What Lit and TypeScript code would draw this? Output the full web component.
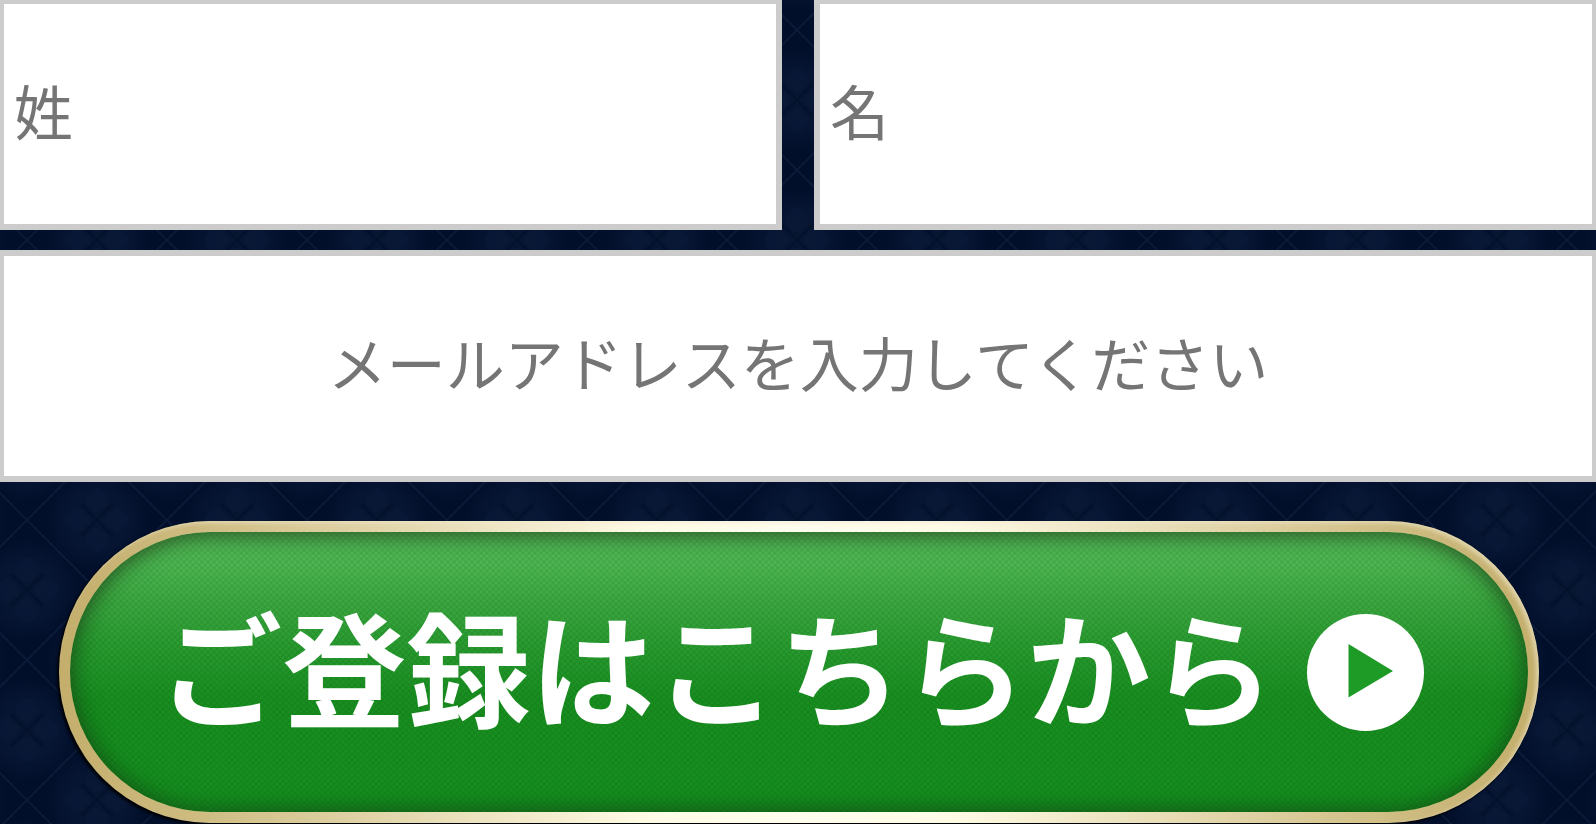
import { LitElement, html, css } from "lit";
import { customElement } from "lit/decorators.js";

@customElement("app-root")
export class AppRoot extends LitElement {
  static styles = css`
    :host {
      display: block;
      min-height: 100vh;
      overflow: hidden;
      box-sizing: border-box;
      font-family: "Noto Sans CJK JP", sans-serif;
      background-color: #010f2b;
      background-image: url("data:image/svg+xml,%3Csvg xmlns='http://www.w3.org/2000/svg' width='140' height='140'%3E%3Cdefs%3E%3CradialGradient id='g'%3E%3Cstop offset='0' stop-color='%23122342' stop-opacity='.34'/%3E%3Cstop offset='.6' stop-color='%23122342' stop-opacity='.28'/%3E%3Cstop offset='1' stop-color='%23122342' stop-opacity='0'/%3E%3C/radialGradient%3E%3Cg id='c'%3E%3Ccircle r='52' fill='url(%23g)'/%3E%3Cg fill='%231a2b4a' fill-opacity='.12'%3E%3Crect x='-10' y='-30' width='20' height='20' rx='5' transform='rotate(45 0 -20)'/%3E%3Crect x='-10' y='10' width='20' height='20' rx='5' transform='rotate(45 0 20)'/%3E%3Crect x='-30' y='-10' width='20' height='20' rx='5' transform='rotate(45 -20 0)'/%3E%3Crect x='10' y='-10' width='20' height='20' rx='5' transform='rotate(45 20 0)'/%3E%3C/g%3E%3Cpath d='M-16-16 16 16M16-16-16 16' stroke='%23000b22' stroke-opacity='.5' stroke-width='2'/%3E%3C/g%3E%3C/defs%3E%3Cuse href='%23c' x='70' y='0'/%3E%3Cuse href='%23c' x='70' y='140'/%3E%3Cuse href='%23c' x='0' y='70'/%3E%3Cuse href='%23c' x='140' y='70'/%3E%3Cpath d='M0 0 140 140M140 0 0 140' stroke='%231f3050' stroke-opacity='.4' stroke-width='1.5'/%3E%3C/svg%3E");
      background-position: 27px 100px;
    }
    .form {
      display: flex;
      flex-direction: column;
      gap: 20px;
    }
    .names {
      display: grid;
      grid-template-columns: 1fr 1fr;
      gap: 32px;
    }
    .field {
      display: block;
      box-sizing: border-box;
      width: 100%;
      height: 232px;
      margin: 0;
      padding: 0 10px 10px;
      border: 6px solid #ccc;
      border-radius: 0;
      background: #fff;
      color: #333;
      font: 400 59px "Noto Sans CJK JP", sans-serif;
      outline: none;
    }
    .field::placeholder {
      color: #757575;
      opacity: 1;
    }
    .names .field {
      height: 230px;
      border-top-width: 4px;
    }
    .family {
      border-left-width: 4px;
    }
    .given {
      border-right-width: 4px;
    }
    .email {
      border-left-width: 4px;
      border-right-width: 4px;
      text-align: center;
    }
    .submit {
      display: flex;
      box-sizing: border-box;
      height: 302px;
      margin: 19px 57px 0 59px;
      padding: 0;
      border: 11px solid transparent;
      border-radius: 151px;
      background:
        linear-gradient(90deg, #c4ae6c, #cdbb80 9%, #fffbe6 40%, #fffdee 50%, #fffbe6 60%, #cdbb80 91%, #c4ae6c) border-box;
      box-shadow: -2px 2px 3px #000;
      position: relative;
      color: #fff;
      font: 700 124px "Noto Sans CJK JP", sans-serif;
      line-height: 1;
      white-space: nowrap;
      cursor: pointer;
    }
    /* soft light along the upper right of the gold rim */
    .submit::after {
      content: "";
      position: absolute;
      inset: -11px;
      border-radius: inherit;
      box-shadow: inset -3px 2px 4px #f0ead0a0;
      pointer-events: none;
    }
    .face {
      flex: 1;
      display: flex;
      align-items: center;
      justify-content: center;
      gap: 32px;
      padding-right: 16px;
      border-radius: 140px;
      background:
        radial-gradient(circle, #00400038 1px, #0000 3px) 0 0 / 6px 6px,
        radial-gradient(circle, #00400038 1px, #0000 3px) 3px 3px / 6px 6px,
        linear-gradient(#62c966, #56c45c 12%, #44b44a 25%, #2ea636 40%, #1b9724 60%, #189924);
      box-shadow:
        inset 0 0 24px 2px #0a3a1090,
        inset 0 4px 16px #3a402060;
    }
    .label {
      padding-bottom: 16px;
    }
    .play {
      width: 117px;
      height: 117px;
      flex: none;
    }
  `;

  render() {
    return html`
      <form class="form" @submit=${(e: Event) => e.preventDefault()}>
        <div class="names">
          <input class="field family" type="text" name="family" placeholder="姓" aria-label="姓" />
          <input class="field given" type="text" name="given" placeholder="名" aria-label="名" />
        </div>
        <input
          class="field email"
          type="email"
          name="email"
          placeholder="メールアドレスを入力してください"
          aria-label="メールアドレス"
        />
        <button class="submit" type="submit">
          <span class="face">
            <span class="label">ご登録はこちらから</span>
            <svg class="play" viewBox="0 0 117 117" aria-hidden="true">
              <circle cx="58.5" cy="58.5" r="58.5" fill="#fff" />
              <path d="M41.500 30v53.500L86 57z" fill="#1e9a26" />
            </svg>
          </span>
        </button>
      </form>
    `;
  }
}
